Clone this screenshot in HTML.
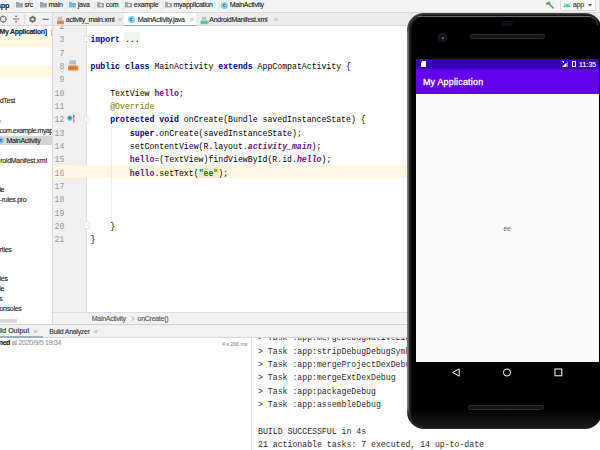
<!DOCTYPE html><html><head><meta charset="utf-8"><style>
*{margin:0;padding:0;box-sizing:border-box}
html,body{width:600px;height:450px;overflow:hidden;background:#fff;position:relative;font-family:"Liberation Sans",sans-serif}
.a{position:absolute}
.mono{font-family:"Liberation Mono",monospace;font-size:8.2px;white-space:pre;line-height:13.333px;color:#000}
.kw{color:#000080;font-weight:bold}
.fld{color:#660e7a;font-weight:bold}
.fldi{color:#660e7a;font-weight:bold;font-style:italic}
.ann{color:#808000}
.str{color:#008000;font-weight:bold}
.ui{font-family:"Liberation Sans",sans-serif;font-size:7px;line-height:10px;white-space:pre;color:#222;letter-spacing:-0.15px}
.ln{color:#999;text-align:right;width:12px}
</style></head><body>
<div class="a" style="left:0px;top:0px;width:600px;height:13px;background:#f4f4f4;border-bottom:1px solid #dadada"></div>
<div class="a" style="left:0px;top:13px;width:52px;height:13px;background:#f2f2f2;border-bottom:1px solid #dadada"></div>
<div class="a" style="left:53px;top:13px;width:547px;height:13px;background:#ededed;border-bottom:1px solid #d8d8d8"></div>
<div class="a" style="left:124px;top:13px;width:72px;height:13px;background:#fff;border-bottom:1.5px solid #a0aec0"></div>
<div class="a" style="left:0px;top:26px;width:52px;height:298px;background:#fff"></div>
<div class="a" style="left:0px;top:36px;width:52px;height:10.5px;background:#fcfadf"></div>
<div class="a" style="left:0px;top:66px;width:52px;height:10.5px;background:#fcfadf"></div>
<div class="a" style="left:0px;top:136px;width:52px;height:9px;background:#d5d5d5"></div>
<div class="a" style="left:0px;top:318.7px;width:17.3px;height:4.6px;background:#d8d8d8"></div>
<div class="a" style="left:53px;top:26px;width:34px;height:286px;background:#f0f0f0"></div>
<div class="a" style="left:86px;top:26px;width:1px;height:286px;background:#e0e0e0"></div>
<div class="a" style="left:53px;top:165px;width:355px;height:13px;background:#fcf8e3"></div>
<div class="a" style="left:124.3px;top:31.7px;width:15.4px;height:13.3px;background:#edf7ea"></div>
<div class="a" style="left:198.8px;top:165px;width:20.4px;height:13px;background:#f2eed6"></div>
<div class="a" style="left:111px;top:125.0001px;width:1px;height:93.3331px;background:#ececec"></div>
<div class="a" style="left:52px;top:13px;width:1px;height:311px;background:#d9d9d9"></div>
<div class="a" style="left:53px;top:312px;width:547px;height:12px;background:#f2f2f2;border-top:1px solid #dedede"></div>
<div class="a" style="left:0px;top:324px;width:600px;height:14px;background:#f2f2f2;border-top:1px solid #d0d0d0;border-bottom:1px solid #d8d8d8"></div>
<div class="a" style="left:0px;top:336px;width:43px;height:1.5px;background:#a0aec0"></div>
<div class="a" style="left:251px;top:338px;width:1px;height:112px;background:#e2e2e2"></div>
<div class="a" style="font-family:'Liberation Sans',sans-serif;font-size:7px;line-height:10px;white-space:pre;letter-spacing:-0.28px;-webkit-text-stroke:0.12px currentColor;left:-3.2px;top:0.58px;color:#222;font-weight:bold;font-size:7.4px">app</div>
<svg class="a" style="left:11px;top:1px" width="4" height="9" viewBox="0 0 4 9"><path d="M0.5 0.5 L3.2 4.5 L0.5 8.5" fill="none" stroke="#d2d2d2" stroke-width="0.8"/></svg>
<svg class="a" style="left:16px;top:2px" width="7" height="5.5" viewBox="0 0 7 5.5"><path d="M0 0 H2.8 L3.6 0.9 H7 V5.5 H0 Z" fill="#9aa7b0"/></svg>
<div class="a" style="font-family:'Liberation Sans',sans-serif;font-size:7px;line-height:10px;white-space:pre;letter-spacing:-0.28px;-webkit-text-stroke:0.12px currentColor;left:24.5px;top:0.38px;color:#222;">src</div>
<svg class="a" style="left:35px;top:1px" width="4" height="9" viewBox="0 0 4 9"><path d="M0.5 0.5 L3.2 4.5 L0.5 8.5" fill="none" stroke="#d2d2d2" stroke-width="0.8"/></svg>
<svg class="a" style="left:40px;top:2px" width="7" height="5.5" viewBox="0 0 7 5.5"><path d="M0 0 H2.8 L3.6 0.9 H7 V5.5 H0 Z" fill="#9aa7b0"/></svg>
<div class="a" style="font-family:'Liberation Sans',sans-serif;font-size:7px;line-height:10px;white-space:pre;letter-spacing:-0.28px;-webkit-text-stroke:0.12px currentColor;left:48.5px;top:0.38px;color:#222;">main</div>
<svg class="a" style="left:65px;top:1px" width="4" height="9" viewBox="0 0 4 9"><path d="M0.5 0.5 L3.2 4.5 L0.5 8.5" fill="none" stroke="#d2d2d2" stroke-width="0.8"/></svg>
<svg class="a" style="left:69.3px;top:2px" width="7" height="5.5" viewBox="0 0 7 5.5"><path d="M0 0 H2.8 L3.6 0.9 H7 V5.5 H0 Z" fill="#69b8dc"/></svg>
<div class="a" style="font-family:'Liberation Sans',sans-serif;font-size:7px;line-height:10px;white-space:pre;letter-spacing:-0.28px;-webkit-text-stroke:0.12px currentColor;left:77.8px;top:0.38px;color:#222;">java</div>
<svg class="a" style="left:93px;top:1px" width="4" height="9" viewBox="0 0 4 9"><path d="M0.5 0.5 L3.2 4.5 L0.5 8.5" fill="none" stroke="#d2d2d2" stroke-width="0.8"/></svg>
<svg class="a" style="left:97px;top:2px" width="7" height="5.5" viewBox="0 0 7 5.5"><path d="M0 0 H2.8 L3.6 0.9 H7 V5.5 H0 Z" fill="#9aa7b0"/></svg>
<div class="a" style="left:99.5px;top:4.3px;width:2px;height:2px;background:#e8ecef"></div>
<div class="a" style="font-family:'Liberation Sans',sans-serif;font-size:7px;line-height:10px;white-space:pre;letter-spacing:-0.28px;-webkit-text-stroke:0.12px currentColor;left:105.8px;top:0.38px;color:#222;">com</div>
<svg class="a" style="left:121.5px;top:1px" width="4" height="9" viewBox="0 0 4 9"><path d="M0.5 0.5 L3.2 4.5 L0.5 8.5" fill="none" stroke="#d2d2d2" stroke-width="0.8"/></svg>
<svg class="a" style="left:125px;top:2px" width="7" height="5.5" viewBox="0 0 7 5.5"><path d="M0 0 H2.8 L3.6 0.9 H7 V5.5 H0 Z" fill="#9aa7b0"/></svg>
<div class="a" style="left:127.5px;top:4.3px;width:2px;height:2px;background:#e8ecef"></div>
<div class="a" style="font-family:'Liberation Sans',sans-serif;font-size:7px;line-height:10px;white-space:pre;letter-spacing:-0.28px;-webkit-text-stroke:0.12px currentColor;left:133.8px;top:0.38px;color:#222;">example</div>
<svg class="a" style="left:161px;top:1px" width="4" height="9" viewBox="0 0 4 9"><path d="M0.5 0.5 L3.2 4.5 L0.5 8.5" fill="none" stroke="#d2d2d2" stroke-width="0.8"/></svg>
<svg class="a" style="left:165px;top:2px" width="7" height="5.5" viewBox="0 0 7 5.5"><path d="M0 0 H2.8 L3.6 0.9 H7 V5.5 H0 Z" fill="#9aa7b0"/></svg>
<div class="a" style="left:167.5px;top:4.3px;width:2px;height:2px;background:#e8ecef"></div>
<div class="a" style="font-family:'Liberation Sans',sans-serif;font-size:7px;line-height:10px;white-space:pre;letter-spacing:-0.28px;-webkit-text-stroke:0.12px currentColor;left:173.5px;top:0.38px;color:#222;">myapplication</div>
<svg class="a" style="left:217.3px;top:1px" width="4" height="9" viewBox="0 0 4 9"><path d="M0.5 0.5 L3.2 4.5 L0.5 8.5" fill="none" stroke="#d2d2d2" stroke-width="0.8"/></svg>
<div class="a" style="left:221px;top:2px;width:6.6px;height:6.6px;border-radius:50%;background:#86d0ec"></div>
<div class="a" style="left:222.85px;top:3.85px;width:2.90px;height:2.90px;border-radius:50%;border:0.9px solid #3d6a7c;border-right-color:transparent"></div>
<div class="a" style="font-family:'Liberation Sans',sans-serif;font-size:7px;line-height:10px;white-space:pre;letter-spacing:-0.28px;-webkit-text-stroke:0.12px currentColor;left:229.8px;top:0.38px;color:#222;">MainActivity</div>
<svg class="a" style="left:544px;top:0px" width="11" height="10" viewBox="544 0 11 10"><path d="M545.3 3.6 L549.2 1.2 L550.8 2.9 L547 5.2 Z" fill="#59a869"/><path d="M548.6 3.4 L553.6 8.4" stroke="#59a869" stroke-width="1.6"/></svg>
<div class="a" style="left:559.5px;top:-1px;width:36px;height:12px;background:#fbfbfb;border:1px solid #d8d8d8;border-radius:1.5px"></div>
<svg class="a" style="left:563px;top:2px" width="8" height="6" viewBox="0 0 8 6"><path d="M0.5 5.2 A3.5 3.3 0 0 1 7.5 5.2 Z" fill="#3ddc84"/><path d="M1.6 1.2 L2.4 2.4 M6.4 1.2 L5.6 2.4" stroke="#3ddc84" stroke-width="0.6"/><circle cx="2.7" cy="3.8" r="0.45" fill="#fff"/><circle cx="5.3" cy="3.8" r="0.45" fill="#fff"/></svg>
<div class="a" style="font-family:'Liberation Sans',sans-serif;font-size:7px;line-height:10px;white-space:pre;letter-spacing:-0.28px;-webkit-text-stroke:0.12px currentColor;left:572.8px;top:0.18px;color:#333;font-size:7.3px">app</div>
<svg class="a" style="left:588.3px;top:4px" width="4" height="3" viewBox="0 0 4 3"><path d="M0 0 H4 L2 2.6 Z" fill="#555"/></svg>
<div class="a" style="left:598.7px;top:0;width:1px;height:11px;background:#d8d8d8"></div>
<svg class="a" style="left:0;top:13px" width="52" height="13" viewBox="0 13 52 13"><circle cx="3.2" cy="19.1" r="3" fill="none" stroke="#6e6e6e" stroke-width="1"/><path d="M3.2 15.6 V17.6 M3.2 20.6 V22.6 M-0.3 19.1 H1.7 M4.7 19.1 H6.7" stroke="#6e6e6e" stroke-width="0.9"/><path d="M13 19.1 H19.2" stroke="#6e6e6e" stroke-width="1"/><path d="M14.8 15.8 H17.4 L16.1 17.6 Z M14.8 22.3 H17.4 L16.1 20.5 Z" fill="#6e6e6e"/><path d="M24.8 14.6 V24" stroke="#d0d0d0" stroke-width="0.8"/><circle cx="32.6" cy="19.3" r="2.4" fill="none" stroke="#6e6e6e" stroke-width="1.5"/><path d="M32.6 15.8 V22.8 M29.6 17.5 L35.6 21.1 M29.6 21.1 L35.6 17.5" stroke="#6e6e6e" stroke-width="1"/><circle cx="32.6" cy="19.3" r="1.1" fill="#f2f2f2"/><path d="M42.6 19.3 H48.7" stroke="#6e6e6e" stroke-width="1.2"/></svg>
<svg class="a" style="left:56px;top:15.5px" width="9" height="9" viewBox="0 0 9 9"><path d="M2 0.7 H6.5 V4.3 H1.5 V1.5 Z" fill="#b9c4cc"/><rect x="1" y="4.5" width="7" height="3.8" fill="#f28c4a"/><path d="M2.5 5.6 L2 6.4 L2.5 7.2 M6 5.6 L6.5 6.4 L6 7.2 M4.5 5.4 L4 7.4" stroke="#8a4a20" stroke-width="0.5" fill="none"/></svg>
<div class="a" style="font-family:'Liberation Sans',sans-serif;font-size:7px;line-height:10px;white-space:pre;letter-spacing:-0.28px;-webkit-text-stroke:0.12px currentColor;left:65.8px;top:14.58px;color:#222;">activity_main.xml</div>
<div class="a" style="font-family:'Liberation Sans',sans-serif;font-size:7px;line-height:10px;white-space:pre;letter-spacing:-0.28px;-webkit-text-stroke:0.12px currentColor;left:117.6px;top:14.58px;color:#b8b8b8;font-size:8px">×</div>
<div class="a" style="left:128.4px;top:16px;width:6.6px;height:6.6px;border-radius:50%;background:#86d0ec"></div>
<div class="a" style="left:130.25px;top:17.85px;width:2.90px;height:2.90px;border-radius:50%;border:0.9px solid #3d6a7c;border-right-color:transparent"></div>
<div class="a" style="font-family:'Liberation Sans',sans-serif;font-size:7px;line-height:10px;white-space:pre;letter-spacing:-0.28px;-webkit-text-stroke:0.12px currentColor;left:137.8px;top:14.58px;color:#222;">MainActivity.java</div>
<div class="a" style="font-family:'Liberation Sans',sans-serif;font-size:7px;line-height:10px;white-space:pre;letter-spacing:-0.28px;-webkit-text-stroke:0.12px currentColor;left:189.4px;top:14.58px;color:#b8b8b8;font-size:8px">×</div>
<svg class="a" style="left:199.5px;top:15.5px" width="9" height="9" viewBox="0 0 9 9"><path d="M2.5 0.7 H6.5 V4.3 H2 V1.5 Z" fill="#b9c4cc"/><rect x="0.5" y="4.5" width="8" height="3.8" fill="#6fd99a"/><path d="M1.8 5.4 V7.4 M4 5.4 V7.4 M6.2 5.4 V7.4" stroke="#2d6b44" stroke-width="0.6"/></svg>
<div class="a" style="font-family:'Liberation Sans',sans-serif;font-size:7px;line-height:10px;white-space:pre;letter-spacing:-0.28px;-webkit-text-stroke:0.12px currentColor;left:209.3px;top:14.58px;color:#222;">AndroidManifest.xml</div>
<div class="a" style="font-family:'Liberation Sans',sans-serif;font-size:7px;line-height:10px;white-space:pre;letter-spacing:-0.28px;-webkit-text-stroke:0.12px currentColor;left:273.6px;top:14.58px;color:#b8b8b8;font-size:8px">×</div>
<div class="a" style="left:0;top:26px;width:52px;height:298px;overflow:hidden"><div class="a" style="left:0;top:-26px;width:52px;height:324px">
<div class="a" style="font-family:'Liberation Sans',sans-serif;font-size:7px;line-height:10px;white-space:pre;letter-spacing:-0.28px;-webkit-text-stroke:0.12px currentColor;left:-0.6px;top:26.98px;color:#222;font-weight:bold;letter-spacing:-0.3px">My Application]</div>
<div class="a" style="font-family:'Liberation Sans',sans-serif;font-size:7px;line-height:10px;white-space:pre;letter-spacing:-0.28px;-webkit-text-stroke:0.12px currentColor;left:50.8px;top:26.98px;color:#c0a080;">[</div>
<div class="a" style="font-family:'Liberation Sans',sans-serif;font-size:7px;line-height:10px;white-space:pre;letter-spacing:-0.28px;-webkit-text-stroke:0.12px currentColor;left:-0.3px;top:96.28px;color:#222;">dTest</div>
<div class="a" style="left:0;top:120px;width:1.2px;height:3px;background:#8fd3f0"></div>
<div class="a" style="font-family:'Liberation Sans',sans-serif;font-size:7px;line-height:10px;white-space:pre;letter-spacing:-0.28px;-webkit-text-stroke:0.12px currentColor;left:-0.6px;top:125.98px;color:#222;letter-spacing:-0.45px">com.example.myapplication</div>
<div class="a" style="left:-2.2px;top:137px;width:6.6px;height:6.6px;border-radius:50%;background:#86d0ec"></div>
<div class="a" style="left:-0.35px;top:138.85px;width:2.90px;height:2.90px;border-radius:50%;border:0.9px solid #3d6a7c;border-right-color:transparent"></div>
<div class="a" style="font-family:'Liberation Sans',sans-serif;font-size:7px;line-height:10px;white-space:pre;letter-spacing:-0.28px;-webkit-text-stroke:0.12px currentColor;left:6.4px;top:135.88px;color:#222;">MainActivity</div>
<div class="a" style="font-family:'Liberation Sans',sans-serif;font-size:7px;line-height:10px;white-space:pre;letter-spacing:-0.28px;-webkit-text-stroke:0.12px currentColor;left:0.2px;top:155.68px;color:#222;">roidManifest.xml</div>
<div class="a" style="font-family:'Liberation Sans',sans-serif;font-size:7px;line-height:10px;white-space:pre;letter-spacing:-0.28px;-webkit-text-stroke:0.12px currentColor;left:-0.7px;top:185.38px;color:#111;-webkit-text-stroke:0.2px #111">le</div>
<div class="a" style="font-family:'Liberation Sans',sans-serif;font-size:7px;line-height:10px;white-space:pre;letter-spacing:-0.28px;-webkit-text-stroke:0.12px currentColor;left:-0.3px;top:195.28px;color:#222;">-rules.pro</div>
<div class="a" style="font-family:'Liberation Sans',sans-serif;font-size:7px;line-height:10px;white-space:pre;letter-spacing:-0.28px;-webkit-text-stroke:0.12px currentColor;left:-0.3px;top:244.78px;color:#222;">rties</div>
<div class="a" style="font-family:'Liberation Sans',sans-serif;font-size:7px;line-height:10px;white-space:pre;letter-spacing:-0.28px;-webkit-text-stroke:0.12px currentColor;left:-0.5px;top:274.48px;color:#222;">ies</div>
<div class="a" style="font-family:'Liberation Sans',sans-serif;font-size:7px;line-height:10px;white-space:pre;letter-spacing:-0.28px;-webkit-text-stroke:0.12px currentColor;left:-0.7px;top:284.38px;color:#222;">le</div>
<div class="a" style="font-family:'Liberation Sans',sans-serif;font-size:7px;line-height:10px;white-space:pre;letter-spacing:-0.28px;-webkit-text-stroke:0.12px currentColor;left:-0.8px;top:294.28px;color:#222;">s</div>
<div class="a" style="font-family:'Liberation Sans',sans-serif;font-size:7px;line-height:10px;white-space:pre;letter-spacing:-0.28px;-webkit-text-stroke:0.12px currentColor;left:-0.6px;top:304.18px;color:#222;">onsoles</div>
</div></div>
<div class="a" style="font-family:'Liberation Sans',sans-serif;font-size:7px;line-height:10px;white-space:pre;letter-spacing:-0.28px;-webkit-text-stroke:0.12px currentColor;left:91.8px;top:313.58px;color:#555;">MainActivity</div>
<svg class="a" style="left:131px;top:316px" width="4" height="5" viewBox="0 0 4 5"><path d="M0.5 0.5 L3.2 2.5 L0.5 4.5" fill="none" stroke="#999" stroke-width="0.8"/></svg>
<div class="a" style="font-family:'Liberation Sans',sans-serif;font-size:7px;line-height:10px;white-space:pre;letter-spacing:-0.28px;-webkit-text-stroke:0.12px currentColor;left:137.6px;top:313.58px;color:#555;">onCreate()</div>
<div class="a" style="font-family:'Liberation Sans',sans-serif;font-size:7px;line-height:10px;white-space:pre;letter-spacing:-0.28px;-webkit-text-stroke:0.12px currentColor;left:-0.8px;top:326.38px;color:#333;letter-spacing:0px;-webkit-text-stroke:0.15px #333">ild Output</div>
<div class="a" style="font-family:'Liberation Sans',sans-serif;font-size:7px;line-height:10px;white-space:pre;letter-spacing:-0.28px;-webkit-text-stroke:0.12px currentColor;left:33.2px;top:326.58px;color:#b0b0b0;font-size:8px">×</div>
<div class="a" style="font-family:'Liberation Sans',sans-serif;font-size:7px;line-height:10px;white-space:pre;letter-spacing:-0.28px;-webkit-text-stroke:0.12px currentColor;left:49.3px;top:326.58px;color:#333;">Build Analyzer</div>
<div class="a" style="font-family:'Liberation Sans',sans-serif;font-size:7px;line-height:10px;white-space:pre;letter-spacing:-0.28px;-webkit-text-stroke:0.12px currentColor;left:93.2px;top:326.58px;color:#b0b0b0;font-size:8px">×</div>
<div class="a" style="font-family:'Liberation Sans',sans-serif;font-size:7px;line-height:10px;white-space:pre;letter-spacing:-0.28px;-webkit-text-stroke:0.12px currentColor;left:-1.2px;top:338.18px;color:#111;font-weight:bold;letter-spacing:-0.45px">ned</div>
<div class="a" style="font-family:'Liberation Sans',sans-serif;font-size:7px;line-height:10px;white-space:pre;letter-spacing:-0.28px;-webkit-text-stroke:0.12px currentColor;left:11.5px;top:338.18px;color:#999;">at 2020/9/5 19:34</div>
<div class="a" style="font-family:'Liberation Sans',sans-serif;font-size:7px;line-height:10px;white-space:pre;letter-spacing:-0.28px;-webkit-text-stroke:0.12px currentColor;font-size:5.4px;letter-spacing:-0.1px;left:222px;top:338.8px;color:#999">4 s 266 ms</div>
<svg class="a" style="left:53px;top:26px" width="40" height="286" viewBox="53 26 40 286"><path d="M70.5 60.2 H76 V64.6 H69.2 V61.5 Z" fill="#b7c2cb"/><rect x="68" y="65.4" width="10.3" height="5.1" fill="#f28c4a"/><path d="M71.2 66.5 L70.1 67.95 L71.2 69.4 M75.1 66.5 L76.2 67.95 L75.1 69.4 M73.6 66.3 L72.7 69.6" stroke="#7a3d15" stroke-width="0.6" fill="none"/><circle cx="69.8" cy="118.1" r="2.7" fill="#5cbfe6"/><circle cx="69.8" cy="118.1" r="1" fill="#2b4b5c"/><path d="M73.8 115.2 V122.5" stroke="#e05a6a" stroke-width="0.9"/><path d="M72.6 116.4 L73.8 114.5 L75 116.4 Z" fill="#e03040"/><rect x="84.4" y="36.2" width="5" height="5.2" fill="#fff" stroke="#d2d2d2" stroke-width="0.6"/><path d="M85.6 38.8 H88.2" stroke="#c8c8c8" stroke-width="0.5"/><path d="M84.4 116.3 H89.4 V120.3 L86.9 122.2 L84.4 120.3 Z" fill="#fff" stroke="#d2d2d2" stroke-width="0.6"/><path d="M85.7 118.6 H88.1" stroke="#c8c8c8" stroke-width="0.5"/><path d="M84.4 228.4 H89.4 V223.4 L86.9 221.2 L84.4 223.4 Z" fill="#fff" stroke="#d2d2d2" stroke-width="0.6"/><path d="M85.7 225.4 H88.1" stroke="#c8c8c8" stroke-width="0.5"/></svg>
<div class="a" style="left:0;top:26px;width:408px;height:286px;overflow:hidden"><div class="a" style="left:0;top:-26px;width:408px;height:312px">
<div class="a mono ln" style="left:52.3px;top:19.83px;width:12px"> 2</div>
<div class="a mono" style="left:90.5px;top:19.83px;"></div>
<div class="a mono ln" style="left:52.3px;top:33.17px;width:12px"> 3</div>
<div class="a mono" style="left:90.5px;top:33.17px;"><span class="kw">import</span> ...</div>
<div class="a mono ln" style="left:52.3px;top:46.5px;width:12px"> 7</div>
<div class="a mono" style="left:90.5px;top:46.5px;"></div>
<div class="a mono ln" style="left:52.3px;top:59.83px;width:12px"> 8</div>
<div class="a mono" style="left:90.5px;top:59.83px;"><span class="kw">public class</span> MainActivity <span class="kw">extends</span> AppCompatActivity {</div>
<div class="a mono ln" style="left:52.3px;top:73.17px;width:12px"> 9</div>
<div class="a mono" style="left:90.5px;top:73.17px;"></div>
<div class="a mono ln" style="left:52.3px;top:86.5px;width:12px">10</div>
<div class="a mono" style="left:90.5px;top:86.5px;">    TextView <span class="fld">hello</span>;</div>
<div class="a mono ln" style="left:52.3px;top:99.83px;width:12px">11</div>
<div class="a mono" style="left:90.5px;top:99.83px;">    <span class="ann">@Override</span></div>
<div class="a mono ln" style="left:52.3px;top:113.17px;width:12px">12</div>
<div class="a mono" style="left:90.5px;top:113.17px;">    <span class="kw">protected void</span> onCreate(Bundle savedInstanceState) {</div>
<div class="a mono ln" style="left:52.3px;top:126.5px;width:12px">13</div>
<div class="a mono" style="left:90.5px;top:126.5px;">        <span class="kw">super</span>.onCreate(savedInstanceState);</div>
<div class="a mono ln" style="left:52.3px;top:139.83px;width:12px">14</div>
<div class="a mono" style="left:90.5px;top:139.83px;">        setContentView(R.layout.<span class="fldi">activity_main</span>);</div>
<div class="a mono ln" style="left:52.3px;top:153.17px;width:12px">15</div>
<div class="a mono" style="left:90.5px;top:153.17px;">        <span class="fld">hello</span>=(TextView)findViewById(R.id.<span class="fldi">hello</span>);</div>
<div class="a mono ln" style="left:52.3px;top:166.5px;width:12px">16</div>
<div class="a mono" style="left:90.5px;top:166.5px;">        <span class="fld">hello</span>.setText(<span class="str">"ee"</span>);</div>
<div class="a mono ln" style="left:52.3px;top:179.83px;width:12px">17</div>
<div class="a mono" style="left:90.5px;top:179.83px;"></div>
<div class="a mono ln" style="left:52.3px;top:193.17px;width:12px">18</div>
<div class="a mono" style="left:90.5px;top:193.17px;"></div>
<div class="a mono ln" style="left:52.3px;top:206.5px;width:12px">19</div>
<div class="a mono" style="left:90.5px;top:206.5px;"></div>
<div class="a mono ln" style="left:52.3px;top:219.83px;width:12px">20</div>
<div class="a mono" style="left:90.5px;top:219.83px;">    }</div>
<div class="a mono ln" style="left:52.3px;top:233.17px;width:12px">21</div>
<div class="a mono" style="left:90.5px;top:233.17px;">}</div>
</div></div>
<div class="a" style="left:252px;top:338px;width:348px;height:112px;overflow:hidden">
<div class="a mono" style="left:6px;top:-6.69px;color:#2b2b2b">&gt; Task :app:mergeDebugNativeLibs</div>
<div class="a mono" style="left:6px;top:6.64px;color:#2b2b2b">&gt; Task :app:stripDebugDebugSymbols</div>
<div class="a mono" style="left:6px;top:19.97px;color:#2b2b2b">&gt; Task :app:mergeProjectDexDebug</div>
<div class="a mono" style="left:6px;top:33.31px;color:#2b2b2b">&gt; Task :app:mergeExtDexDebug</div>
<div class="a mono" style="left:6px;top:46.64px;color:#2b2b2b">&gt; Task :app:packageDebug</div>
<div class="a mono" style="left:6px;top:59.97px;color:#2b2b2b">&gt; Task :app:assembleDebug</div>
<div class="a mono" style="left:6px;top:73.31px;color:#2b2b2b"></div>
<div class="a mono" style="left:6px;top:86.64px;color:#2b2b2b">BUILD SUCCESSFUL in 4s</div>
<div class="a mono" style="left:6px;top:99.97px;color:#2b2b2b">21 actionable tasks: 7 executed, 14 up-to-date</div>
</div>
<div class="a" style="left:407px;top:12.9px;width:194.5px;height:416.4px;border-radius:17px;background:linear-gradient(#444,#3a3a3a 50%,#151515 95%,#2a2a2a)"></div>
<div class="a" style="left:407px;top:26px;width:2.5px;height:390px;background:linear-gradient(90deg,#8a8a8a,#333);-webkit-mask-image:linear-gradient(transparent,#000 8px,#000 382px,transparent)"></div>
<div class="a" style="left:409.3px;top:14.4px;width:192px;height:413.9px;border-radius:15.5px;background:linear-gradient(#000 0%,#000 95.5%,#1d1d1d 100%);box-shadow:inset 1.5px 1.2px 2px rgba(85,85,85,0.6)"></div>
<div class="a" style="left:418px;top:16.3px;width:180px;height:9px;border-top:1px solid #6a6a6a;border-right:1px solid #555;border-radius:0 12px 0 0;-webkit-mask-image:linear-gradient(90deg,transparent,#000 22px,#000 100%),linear-gradient(#000,transparent)"></div>
<div class="a" style="left:501px;top:21.3px;width:12.3px;height:4.5px;border-radius:2.3px;background:#0d0d16"></div>
<div class="a" style="left:437.8px;top:32.8px;width:8.8px;height:8.8px;border-radius:50%;background:#141414;border:1px solid #262626"></div>
<div class="a" style="left:440px;top:35px;width:4.4px;height:4.4px;border-radius:50%;background:#0f1530"></div><div class="a" style="left:442px;top:37px;width:2px;height:2px;border-radius:50%;background:#7080d0"></div>
<div class="a" style="left:469.7px;top:34.2px;width:75.6px;height:4.5px;border-radius:2.3px;background:#141414;border:0.8px solid #2e2e2e"></div>
<div class="a" style="left:416px;top:58.7px;width:182.7px;height:303.3px;background:#fafafa"></div>
<div class="a" style="left:416px;top:58.7px;width:182.7px;height:10.3px;background:#3700b3"></div>
<div class="a" style="left:416px;top:69px;width:182.7px;height:24.7px;background:#6200ee"></div>
<div class="a" style="left:423px;top:76px;font:8.9px/12px 'Liberation Sans',sans-serif;color:#fff;white-space:pre;letter-spacing:0.22px;-webkit-text-stroke:0.3px #fff">My Application</div>
<div class="a" style="left:503.5px;top:225.2px;font:6.5px/8px 'Liberation Sans',sans-serif;color:#666;white-space:pre">ee</div>
<div class="a" style="left:421px;top:60.8px;width:5.2px;height:6.2px;background:#fff;border-radius:1px 0 0 0;clip-path:polygon(30% 0,100% 0,100% 100%,0 100%,0 35%)"></div>
<div class="a" style="left:579px;top:60.6px;font:6.8px/8px 'Liberation Sans',sans-serif;color:#fff;white-space:pre;letter-spacing:0.15px;-webkit-text-stroke:0.15px #fff">11:35</div>
<div class="a" style="left:571.8px;top:61.3px;width:4px;height:5.7px;background:#3700b3;border:1.1px solid #fff;border-radius:0.5px"></div>
<div class="a" style="left:573.1px;top:60.5px;width:1.4px;height:1px;background:#fff"></div>
<div class="a" style="left:562px;top:61.3px;width:6px;height:5.7px;background:rgba(255,255,255,0.45);clip-path:polygon(100% 0,100% 100%,0 100%)"></div>
<div class="a" style="left:562px;top:61.3px;width:6px;height:5.7px;background:#fff;clip-path:polygon(70% 30%,70% 100%,0 100%)"></div>
<div class="a" style="left:561.8px;top:60.6px;width:2.6px;height:2.4px;border-top:1px solid #fff;border-right:1px solid #fff"></div>
<svg class="a" style="left:416px;top:362px" width="183" height="22" viewBox="0 0 183 22"><path d="M43.2 6.9 L36.6 10.5 L43.2 14.2 Z" fill="none" stroke="#fff" stroke-width="1"/><circle cx="91" cy="10.5" r="3.6" fill="none" stroke="#fff" stroke-width="1"/><rect x="139" y="7" width="6.8" height="6.8" fill="none" stroke="#fff" stroke-width="1"/></svg>
<div class="a" style="left:468.3px;top:405px;width:75.7px;height:4.7px;border-radius:2.3px;background:#141414;border:0.8px solid #2e2e2e"></div>
</body></html>
